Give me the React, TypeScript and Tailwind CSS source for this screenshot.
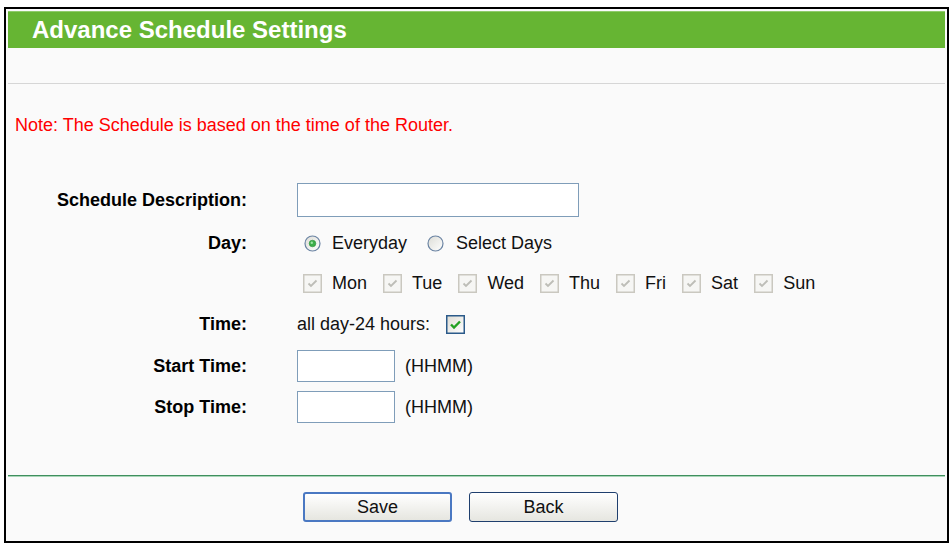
import React from "react";

function Radio({ checked }: { checked?: boolean }) {
  return (
    <svg width="17" height="17" viewBox="0 0 17 17" className="shrink-0">
      <defs>
        <linearGradient id={checked ? "rg1" : "rg2"} x1="0" y1="0" x2="1" y2="1">
          <stop offset="0" stopColor="#dcdcd6" />
          <stop offset="1" stopColor="#ffffff" />
        </linearGradient>
      </defs>
      <circle cx="8.5" cy="8.5" r="7.5" fill={`url(#${checked ? "rg1" : "rg2"})`} stroke="#6b84a3" strokeWidth="1.2" />
      {checked && <circle cx="8.5" cy="8.5" r="3.3" fill="#3dae4a" stroke="#2a8f3a" strokeWidth="0.6" />}
      {checked && <circle cx="7.8" cy="7.8" r="1.2" fill="#9de3a5" />}
    </svg>
  );
}

function DisabledCheck() {
  return (
    <svg width="19" height="19" viewBox="0 0 19 19" className="shrink-0">
      <rect x="0.75" y="0.75" width="17.5" height="17.5" fill="#f6f6f4" stroke="#cac8c0" strokeWidth="1.5" />
      <path d="M5.5 9.5 L8 12 L13.5 6.5" fill="none" stroke="#bdbdb7" strokeWidth="1.8" />
    </svg>
  );
}

function GreenCheck() {
  return (
    <svg width="19" height="19" viewBox="0 0 19 19" className="shrink-0">
      <defs>
        <linearGradient id="gc" x1="0" y1="0" x2="1" y2="1">
          <stop offset="0" stopColor="#dedcd4" />
          <stop offset="1" stopColor="#ffffff" />
        </linearGradient>
      </defs>
      <rect x="0.75" y="0.75" width="17.5" height="17.5" fill="url(#gc)" stroke="#2b5a8a" strokeWidth="1.5" />
      <path d="M5 9.5 L8 12.5 L14 6.5" fill="none" stroke="#21a121" strokeWidth="2.4" />
    </svg>
  );
}

const days = ["Mon", "Tue", "Wed", "Thu", "Fri", "Sat", "Sun"];

function Row({ label, children, className }: { label: string; children: React.ReactNode; className?: string }) {
  return (
    <div className={`flex items-center h-[34px] ${className ?? ""}`}>
      <div className="w-[239px] text-right font-bold text-[18px] text-black leading-none">{label}</div>
      <div className="ml-[50px] flex items-center">{children}</div>
    </div>
  );
}

export default function App() {
  return (
    <div className="w-[950px] h-[543px] bg-white pt-[7px] pl-[4px]" style={{ fontFamily: '"Liberation Sans", Arial, sans-serif' }}>
      <div className="w-[945px] h-[536px] border-2 border-black bg-[#fafafa] p-[2px] overflow-hidden">
        <div className="h-[37px] bg-[#66b533] border-t border-[#8fcb6a] flex items-center pl-[24px]">
          <span className="text-white font-bold text-[24px] leading-none">Advance Schedule Settings</span>
        </div>
        <div className="mt-[35px] h-px bg-[#d6d6d6]" />
        <div className="mt-[31px] h-[20px] flex items-center pl-[7px] text-[18px] text-[#ff0000] leading-none">
          Note: The Schedule is based on the time of the Router.
        </div>

        <Row label="Schedule Description:" className="mt-[48px]">
          <div className="w-[282px] h-[34px] border border-[#7f9db9] bg-white" />
        </Row>

        <Row label="Day:" className="mt-[9px]">
          <div className="flex items-center text-[18px] text-[#111] leading-none">
            <span className="ml-[7px]"><Radio checked /></span>
            <span className="ml-[11px]">Everyday</span>
            <span className="ml-[20px]"><Radio /></span>
            <span className="ml-[12px]">Select Days</span>
          </div>
        </Row>

        <Row label="" className="mt-[6px]">
          <div className="flex items-center text-[18px] text-[#111] leading-none pl-[6px]">
            {days.map((d, i) => (
              <div key={d} className={`flex items-center ${i > 0 ? "ml-[16px]" : ""}`}>
                <DisabledCheck />
                <span className="ml-[10px]">{d}</span>
              </div>
            ))}
          </div>
        </Row>

        <Row label="Time:" className="mt-[7px]">
          <div className="flex items-center text-[18px] text-[#111] leading-none">
            <span>all day-24 hours:</span>
            <span className="ml-[16px]"><GreenCheck /></span>
          </div>
        </Row>

        <Row label="Start Time:" className="mt-[8px]">
          <div className="flex items-center text-[18px] text-[#111] leading-none">
            <div className="w-[98px] h-[32px] border border-[#7f9db9] bg-white" />
            <span className="ml-[10px]">(HHMM)</span>
          </div>
        </Row>

        <Row label="Stop Time:" className="mt-[7px]">
          <div className="flex items-center text-[18px] text-[#111] leading-none">
            <div className="w-[98px] h-[32px] border border-[#7f9db9] bg-white" />
            <span className="ml-[10px]">(HHMM)</span>
          </div>
        </Row>

        <div className="mt-[51px] h-[2px] bg-[#3f8f5e] border-b border-[#a9d6b8]" />

        <div className="mt-[15px] flex pl-[295px] gap-[17px]">
          <button className="w-[149px] h-[30px] rounded-[3px] border-2 border-[#4a78c2] bg-gradient-to-b from-white to-[#e6e6e0] text-[18px] text-[#111] leading-none flex items-center justify-center">
            Save
          </button>
          <button className="w-[149px] h-[30px] rounded-[3px] border border-[#1f3f6e] bg-gradient-to-b from-white to-[#e6e6e0] text-[18px] text-[#111] leading-none flex items-center justify-center">
            Back
          </button>
        </div>
      </div>
    </div>
  );
}
